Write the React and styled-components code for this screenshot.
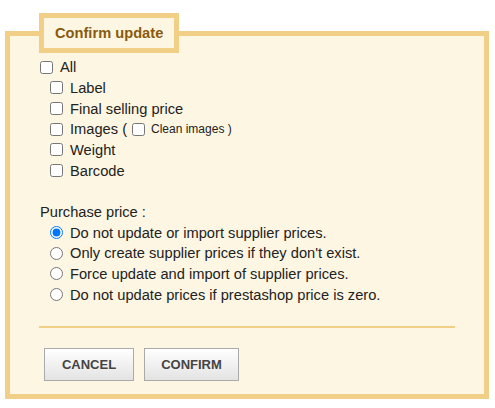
import React, { useState } from 'react'
import styled, { createGlobalStyle } from 'styled-components'

const GlobalStyle = createGlobalStyle`
  * {
    box-sizing: border-box;
  }
  body {
    margin: 0;
    background: #ffffff;
    font-family: "Liberation Sans", Arial, sans-serif;
    color: #222222;
  }
`

const Page = styled.div`
  padding: 13px 6px 10px 5px;
`

const Fieldset = styled.fieldset`
  margin: 0;
  width: 484px;
  padding: 4px 0 13px 30px;
  border: 5px solid #f2cf87;
  background: #fdf6e2;
  font-size: 11pt;
`

const Legend = styled.legend`
  margin-left: -1px;
  height: 40px;
  padding: 0 11px;
  border: 5px solid #f2cf87;
  background: #fdf6e2;
  color: #8a5a0c;
  font-weight: bold;
  font-size: 11pt;
  line-height: 30px;
`

const Row = styled.label`
  display: flex;
  align-items: center;
  height: 20.67px;
  padding-left: ${p => (p.$indent ? '10px' : '0')};
`

const Box = styled.input`
  width: 13px;
  height: 13px;
  margin: 0 7px 0 0;
  flex: none;
`

const Inline = styled.span`
  display: inline-flex;
  align-items: center;
  white-space: pre;
`

const Small = styled.span`
  font-size: 9pt;
`

const InnerBox = styled(Box)`
  margin: 0 6px 0 5px;
`

const Spacer = styled.div`
  height: 20.67px;
`

const Caption = styled.div`
  height: 20.67px;
  line-height: 20.67px;
`

const Rule = styled.hr`
  width: 416px;
  margin: 21px 0 0 -1px;
  border: 0;
  height: 2px;
  background: #f2cf87;
`

const Actions = styled.div`
  display: flex;
  gap: 10px;
  margin: 20px 0 0 4px;
`

const Button = styled.button`
  height: 33px;
  width: ${p => p.$w}px;
  border: 1px solid #aaaaaa;
  background: linear-gradient(#ffffff, #e3e3e3);
  color: #444444;
  font-family: "Liberation Sans", Arial, sans-serif;
  font-size: 13px;
  font-weight: bold;
  text-transform: uppercase;
  padding: 0;
  cursor: pointer;
`

const options = [
  'Do not update or import supplier prices.',
  "Only create supplier prices if they don't exist.",
  'Force update and import of supplier prices.',
  'Do not update prices if prestashop price is zero.',
]

export default function App() {
  const [price, setPrice] = useState(0)

  return (
    <Page>
      <GlobalStyle />
      <Fieldset>
        <Legend>Confirm update</Legend>
        <Row>
          <Box type="checkbox" />
          All
        </Row>
        <Row $indent>
          <Box type="checkbox" />
          Label
        </Row>
        <Row $indent>
          <Box type="checkbox" />
          Final selling price
        </Row>
        <Row $indent>
          <Box type="checkbox" />
          <Inline>
            Images (
            <InnerBox type="checkbox" />
            <Small>Clean images )</Small>
          </Inline>
        </Row>
        <Row $indent>
          <Box type="checkbox" />
          Weight
        </Row>
        <Row $indent>
          <Box type="checkbox" />
          Barcode
        </Row>
        <Spacer />
        <Caption>Purchase price :</Caption>
        {options.map((text, i) => (
          <Row $indent key={i}>
            <Box
              type="radio"
              name="price"
              checked={price === i}
              onChange={() => setPrice(i)}
            />
            {text}
          </Row>
        ))}
        <Rule />
        <Actions>
          <Button $w={90}>Cancel</Button>
          <Button $w={95}>Confirm</Button>
        </Actions>
      </Fieldset>
    </Page>
  )
}
